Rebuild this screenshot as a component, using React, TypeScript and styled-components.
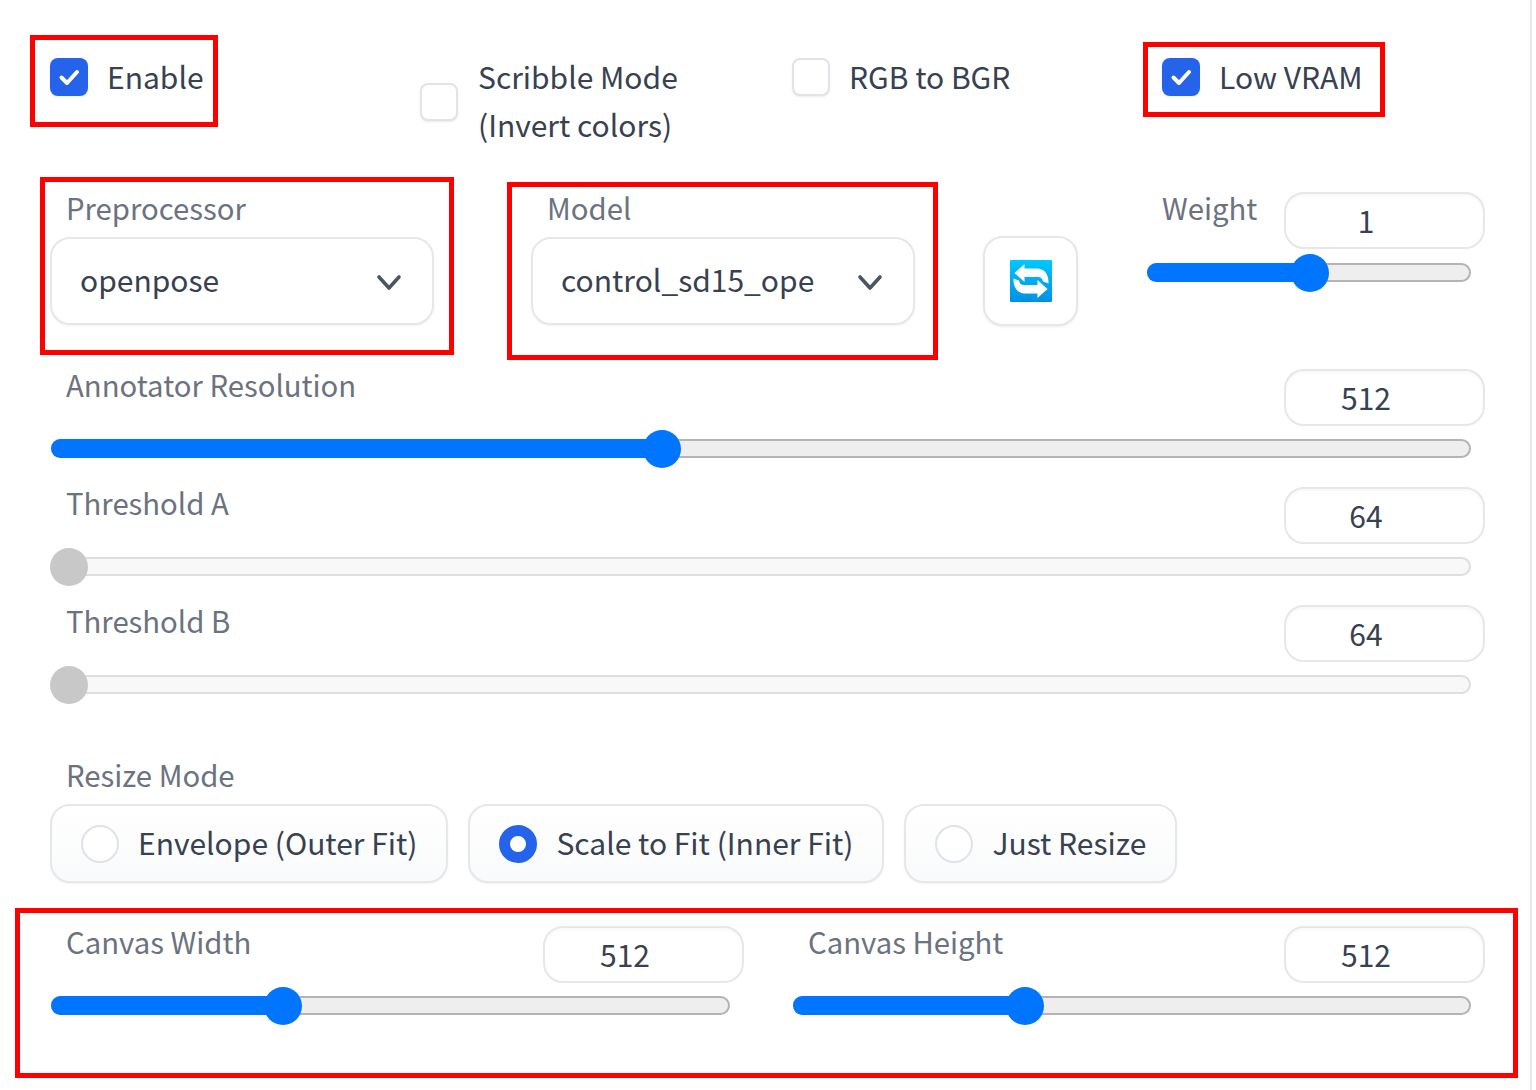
import React from 'react';
import styled, { createGlobalStyle } from 'styled-components';

const GlobalStyle = createGlobalStyle`
  html, body {
    margin: 0;
    padding: 0;
    background: #fff;
  }
  * {
    box-sizing: border-box;
  }
`;

const Page = styled.div`
  width: 1532px;
  height: 1090px;
  padding: 54px 46px 0 50px;
  overflow: hidden;
  background: #fff;
  border-right: 2px solid #e8eaf0;
  color: #374151;
  font-family: "Noto Sans CJK SC", "Noto Sans", sans-serif;
  font-size: 30px;
  line-height: 48px;
`;

const Frame = styled.div<{ $left: number; $top: number; $width: number; $height: number }>`
  position: absolute;
  left: ${p => p.$left}px;
  top: ${p => p.$top}px;
  width: ${p => p.$width}px;
  height: ${p => p.$height}px;
  border: 5px solid #ff0000;
  pointer-events: none;
`;

const OptionsRow = styled.div`
  display: grid;
  grid-template-columns: 370px 372px 370px 321px;
  height: 96px;
`;

const CheckOption = styled.label<{ $center?: boolean }>`
  position: relative;
  display: flex;
  align-items: ${p => (p.$center ? 'center' : 'flex-start')};
  gap: ${p => (p.$center ? 20 : 19)}px;
  height: ${p => (p.$center ? '96px' : '48px')};
`;

const CheckText = styled.span`
  position: relative;
  top: -2px;
`;

const CheckBox = styled.span<{ $checked?: boolean; $top?: number }>`
  flex: none;
  display: flex;
  align-items: center;
  justify-content: center;
  width: 38px;
  height: 38px;
  margin-top: ${p => p.$top ?? 0}px;
  border-radius: 8px;
  background: ${p => (p.$checked ? '#2563eb' : '#fff')};
  border: ${p => (p.$checked ? 'none' : '2px solid #e0e3e8')};
  box-shadow: 0 1px 2px rgba(0, 0, 0, 0.08);
`;

const ModelRow = styled.div`
  display: flex;
  align-items: flex-start;
  margin-top: 42px;
  height: 134px;
`;

const SelectField = styled.div<{ $gap?: number }>`
  position: relative;
  flex: none;
  width: 384px;
  margin-left: ${p => p.$gap ?? 0}px;
`;

const FieldLabel = styled.div`
  padding-left: 16px;
  color: #6b7280;
  font-size: 29.3px;
  line-height: 34px;
  transform: translateY(-2px);
`;

const SelectBox = styled.div`
  display: flex;
  align-items: center;
  justify-content: space-between;
  height: 88px;
  margin-top: 11px;
  padding: 0 30px 0 28px;
  border: 2px solid #e5e7eb;
  border-radius: 20px;
  background: #fff;
  box-shadow: 0 1px 2px rgba(0, 0, 0, 0.05);
`;

const SelectText = styled.span`
  position: relative;
  top: -2px;
`;

const ChevronSlot = styled.span`
  display: flex;
  padding-top: 3px;
`;

const RefreshButton = styled.button`
  flex: none;
  display: flex;
  align-items: center;
  justify-content: center;
  width: 95px;
  height: 90px;
  margin: 44px 0 0 68px;
  padding: 0;
  border: 2px solid #e5e7eb;
  border-radius: 20px;
  background: #fff;
  box-shadow: 0 1px 3px rgba(0, 0, 0, 0.08);
`;

const WeightField = styled.div`
  flex: none;
  width: 338px;
  margin-left: 68px;
`;

const SliderHeader = styled.div`
  display: flex;
  justify-content: space-between;
  height: 56px;
`;

const NumberBox = styled.div`
  flex: none;
  display: flex;
  align-items: center;
  justify-content: center;
  width: 201px;
  height: 57px;
  margin-right: -1px;
  padding: 0 37px 2px 0;
  border: 2px solid #e5e7eb;
  border-radius: 20px;
  background: #fff;
  box-shadow: inset 0 2px 3px rgba(0, 0, 0, 0.03);
`;

const SliderTrack = styled.div<{ $disabled?: boolean; $spacing?: number }>`
  position: relative;
  height: 19px;
  margin: ${p => p.$spacing ?? 14}px 13px 0 1px;
  border: 2px solid ${p => (p.$disabled ? '#dedede' : '#b4b4b4')};
  border-radius: 10px;
  background: ${p => (p.$disabled ? '#f8f8f8' : '#eeeeee')};
`;

const SliderFill = styled.div`
  position: absolute;
  left: -2px;
  top: -2px;
  bottom: -2px;
  border-radius: 10px 0 0 10px;
  background: #0075ff;
`;

const SliderThumb = styled.div<{ $disabled?: boolean }>`
  position: absolute;
  top: 50%;
  width: 38px;
  height: 38px;
  border-radius: 50%;
  transform: translate(-50%, -50%);
  background: ${p => (p.$disabled ? '#c8c8c8' : '#0075ff')};
`;

const SliderField = styled.div<{ $spacing?: number }>`
  position: relative;
  margin-top: ${p => p.$spacing ?? 0}px;
`;

const ResizeLabel = styled(FieldLabel)`
  margin-top: 65px;
`;

const RadioRow = styled.div`
  display: flex;
  gap: 20px;
  margin-top: 11px;
`;

const RadioOption = styled.label`
  display: flex;
  align-items: center;
  gap: 19px;
  height: 79px;
  padding: 0 29px;
  border: 2px solid #e5e7eb;
  border-radius: 20px;
  background: linear-gradient(to bottom, #ffffff, #f9fafb);
  box-shadow: 0 1px 2px rgba(0, 0, 0, 0.05);
  white-space: nowrap;
`;

const RadioText = styled.span`
  position: relative;
  top: -2px;
`;

const RadioDot = styled.span<{ $checked?: boolean }>`
  flex: none;
  width: 38px;
  height: 38px;
  border-radius: 50%;
  background: #fff;
  border: ${p => (p.$checked ? '11px solid #2563eb' : '2px solid #dfe2e7')};
`;

const CanvasRow = styled.div`
  position: relative;
  display: grid;
  grid-template-columns: 693px 692px;
  column-gap: 49px;
  margin-top: 43px;
`;

const Check = () => (
  <svg width="24" height="24" viewBox="0 0 24 24" fill="none">
    <path d="M4.5 12.5 L10 18 L20 7" stroke="#fff" strokeWidth="4" strokeLinecap="round" strokeLinejoin="round" />
  </svg>
);

const Chevron = () => (
  <svg width="26" height="18" viewBox="0 0 26 18" fill="none">
    <path d="M3 3 L13 14 L23 3" stroke="#4b5563" strokeWidth="3.6" strokeLinecap="round" strokeLinejoin="round" />
  </svg>
);

const SwapIcon = () => (
  <svg width="42" height="42" viewBox="0 0 42 42">
    <defs>
      <linearGradient id="swapBg" x1="0" y1="0" x2="0" y2="1">
        <stop offset="0" stopColor="#00c8ff" />
        <stop offset="1" stopColor="#0090e4" />
      </linearGradient>
    </defs>
    <rect width="42" height="42" rx="1" fill="url(#swapBg)" />
    <path d="M14.5 4 L4.5 13 L14.5 22 V17 H28 C31 17 32.5 18.5 33 21.5 L38.5 23.5 C39 14 34 8.5 27 8.5 H14.5 Z" fill="#fff" />
    <path
      d="M27.5 38 L37.5 29 L27.5 20 V25 H14 C11 25 9.5 23.5 9 20.5 L3.5 18.5 C3 28 8 33.5 15 33.5 H27.5 Z"
      fill="#fff"
      stroke="#12a8ee"
      strokeWidth="0.8"
      paintOrder="stroke"
    />
  </svg>
);

type SliderProps = {
  label: string;
  value: string;
  percent: number;
  disabled?: boolean;
  spacing?: number;
};

function Slider({ label, value, percent, disabled, spacing }: SliderProps) {
  return (
    <SliderField $spacing={spacing}>
      <SliderHeader>
        <FieldLabel>{label}</FieldLabel>
        <NumberBox>{value}</NumberBox>
      </SliderHeader>
      <SliderTrack $disabled={disabled}>
        {!disabled && <SliderFill style={{ width: `${percent}%` }} />}
        <SliderThumb $disabled={disabled} style={{ left: `${percent}%` }} />
      </SliderTrack>
    </SliderField>
  );
}

function App() {
  return (
    <Page>
      <GlobalStyle />
      <OptionsRow>
        <CheckOption>
          <CheckBox $checked $top={4}><Check /></CheckBox>
          <CheckText>Enable</CheckText>
          <Frame $left={-20} $top={-19} $width={188} $height={92} />
        </CheckOption>
        <CheckOption $center>
          <CheckBox />
          <CheckText>Scribble Mode<br />(Invert colors)</CheckText>
        </CheckOption>
        <CheckOption>
          <CheckBox $top={4} />
          <CheckText>RGB to BGR</CheckText>
        </CheckOption>
        <CheckOption>
          <CheckBox $checked $top={4}><Check /></CheckBox>
          <CheckText>Low VRAM</CheckText>
          <Frame $left={-19} $top={-12} $width={242} $height={75} />
        </CheckOption>
      </OptionsRow>

      <ModelRow>
        <SelectField>
          <FieldLabel>Preprocessor</FieldLabel>
          <SelectBox><SelectText>openpose</SelectText><ChevronSlot><Chevron /></ChevronSlot></SelectBox>
          <Frame $left={-10} $top={-15} $width={414} $height={178} />
        </SelectField>
        <SelectField $gap={97}>
          <FieldLabel>Model</FieldLabel>
          <SelectBox><SelectText>control_sd15_ope</SelectText><ChevronSlot><Chevron /></ChevronSlot></SelectBox>
          <Frame $left={-24} $top={-10} $width={431} $height={178} />
        </SelectField>
        <RefreshButton><SwapIcon /></RefreshButton>
        <WeightField>
          <SliderHeader>
            <FieldLabel>Weight</FieldLabel>
            <NumberBox>1</NumberBox>
          </SliderHeader>
          <SliderTrack $spacing={15}>
            <SliderFill style={{ width: '50.3%' }} />
            <SliderThumb style={{ left: '50.3%' }} />
          </SliderTrack>
        </WeightField>
      </ModelRow>

      <Slider label="Annotator Resolution" value="512" percent={43} spacing={43} />
      <Slider label="Threshold A" value="64" percent={1.13} disabled spacing={29} />
      <Slider label="Threshold B" value="64" percent={1.13} disabled spacing={29} />

      <ResizeLabel>Resize Mode</ResizeLabel>
      <RadioRow>
        <RadioOption><RadioDot /><RadioText>Envelope (Outer Fit)</RadioText></RadioOption>
        <RadioOption><RadioDot $checked /><RadioText>Scale to Fit (Inner Fit)</RadioText></RadioOption>
        <RadioOption><RadioDot /><RadioText>Just Resize</RadioText></RadioOption>
      </RadioRow>

      <CanvasRow>
        <Slider label="Canvas Width" value="512" percent={34.1} />
        <Slider label="Canvas Height" value="512" percent={34.1} />
        <Frame $left={-35} $top={-18} $width={1503} $height={170} />
      </CanvasRow>
    </Page>
  );
}

export default App;
